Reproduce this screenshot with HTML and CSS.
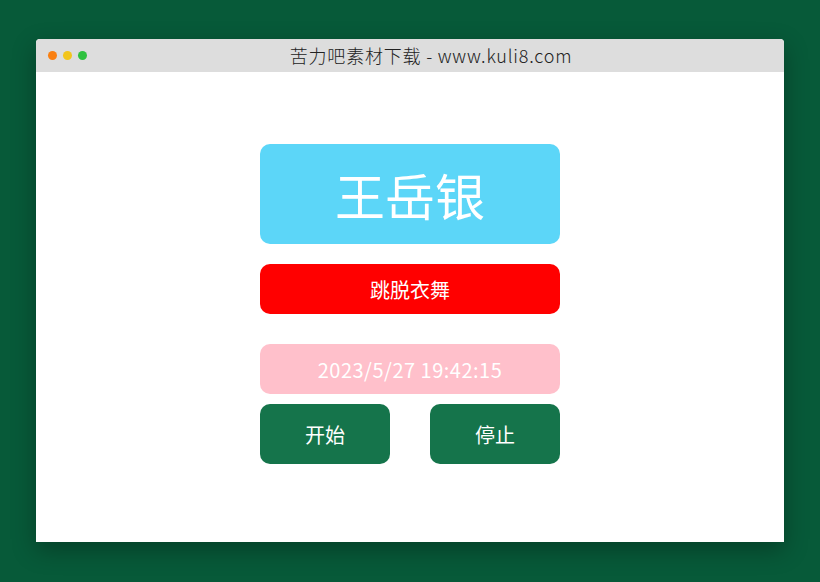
FILE: index.html
```html
<!DOCTYPE html>
<html lang="zh-CN">
<head>
<meta charset="utf-8">
<title>抽奖</title>
<link rel="stylesheet" href="styles.css">
</head>
<body>
<div class="window">
  <div class="titlebar">
    <div class="dots">
      <span class="dot dot-orange"></span>
      <span class="dot dot-yellow"></span>
      <span class="dot dot-green"></span>
    </div>
    <div class="title">苦力吧素材下载 - www.kuli8.com</div>
  </div>
  <div class="content">
    <div class="panel">
      <div class="name">王岳银</div>
      <div class="prize">跳脱衣舞</div>
      <div class="time">2023/5/27 19:42:15</div>
      <div class="actions">
        <button class="btn">开始</button>
        <button class="btn">停止</button>
      </div>
    </div>
  </div>
</div>
</body>
</html>
```
FILE: styles.css
```css
html, body {
  margin: 0;
  padding: 0;
}
body {
  background: #075a39;
  width: 820px;
  height: 582px;
  overflow: hidden;
  font-family: "Noto Sans CJK SC", "Noto Sans", sans-serif;
  padding: 39px 36px 0;
  box-sizing: border-box;
}
.window {
  width: 748px;
  height: 503px;
  background: #fff;
  border-radius: 4px 4px 0 0;
  box-shadow: 0 8px 24px rgba(0, 0, 0, 0.3);
  display: flex;
  flex-direction: column;
  overflow: hidden;
}
.titlebar {
  height: 33px;
  background: #dddddd;
  display: flex;
  align-items: center;
}
.dots {
  display: flex;
  gap: 6px;
  padding-left: 12px;
}
.dot {
  width: 9px;
  height: 9px;
  border-radius: 50%;
}
.dot-orange { background: #f98012; }
.dot-yellow { background: #f2c51c; }
.dot-green { background: #2fc13f; }
.title {
  flex: 1;
  text-align: center;
  font-size: 18px;
  font-weight: 300;
  letter-spacing: 0.8px;
  color: #222;
  padding-right: 9px;
  line-height: 33px;
  white-space: nowrap;
}
.content {
  flex: 1;
  display: flex;
  justify-content: center;
  padding-top: 72px;
}
.panel {
  width: 300px;
  display: flex;
  flex-direction: column;
}
.name {
  height: 100px;
  background: #5cd6f8;
  border-radius: 10px;
  color: #fff;
  font-size: 50px;
  display: flex;
  align-items: center;
  justify-content: center;
}
.prize {
  height: 50px;
  margin-top: 20px;
  background: #ff0000;
  border-radius: 10px;
  color: #fff;
  font-size: 20px;
  display: flex;
  align-items: center;
  justify-content: center;
}
.time {
  height: 50px;
  margin-top: 30px;
  background: #ffc0cb;
  border-radius: 10px;
  color: #fff;
  font-size: 20px;
  letter-spacing: 0.5px;
  display: flex;
  align-items: center;
  justify-content: center;
}
.actions {
  margin-top: 10px;
  display: flex;
  justify-content: space-between;
}
.btn {
  width: 130px;
  height: 60px;
  border: none;
  border-radius: 10px;
  background: #15744b;
  color: #fff;
  font-family: inherit;
  font-size: 20px;
  padding: 0;
}
```
